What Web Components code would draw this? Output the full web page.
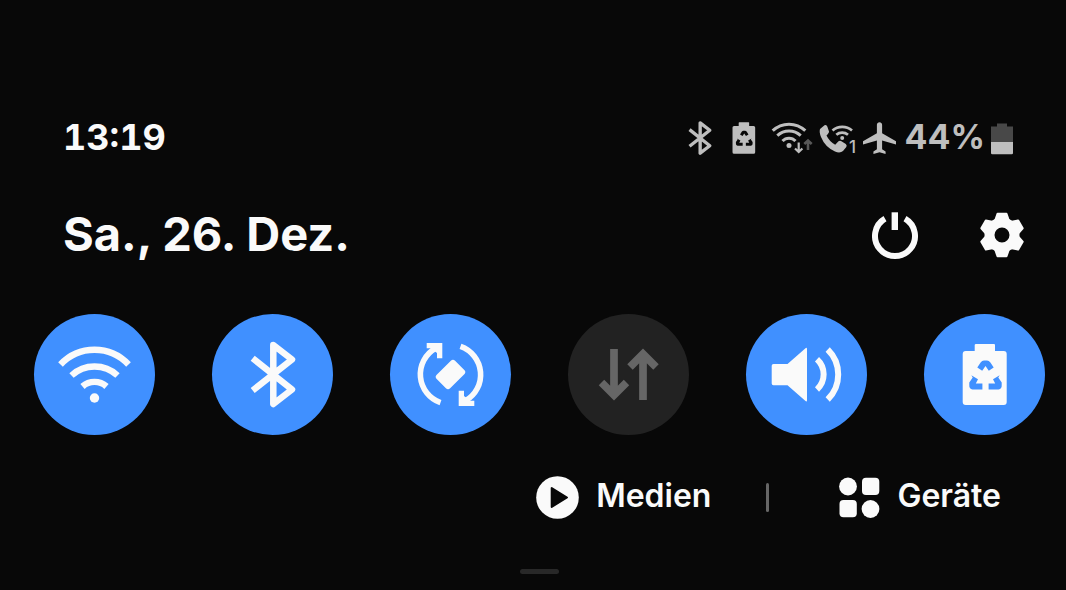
<!DOCTYPE html>
<html lang="de">
<head>
<meta charset="utf-8">
<meta name="viewport" content="width=device-width, initial-scale=1">
<title>Schnelleinstellungen</title>
<style>
  html { background: #080808; }
  body { margin: 0; background: #080808; color: #fafafa; font-family: Inter, "Liberation Sans", sans-serif; }
</style>
</head>
<body>
<quick-panel></quick-panel>
<script>
// Three chunks of the recycling triangle, cut out of the battery in the colour behind it.
const RECYCLE = '<g fill="var(--hole)"><path d="M53.3 53.5 56.6 48.5Q58 46.6 60 46.6H63Q65 46.6 66.400 48.5L69.700 53.5 64.800 56.800 61.500 52 58.200 56.800z"/><path d="M47.300 61.300 54 65.200 51.800 69.500H58.400V75.500H48.500Q45 74.800 45.300 71V68.500L48.700 63.500z"/><path d="M75.700 61.300 69 65.200 71.200 69.500H64.600V75.500H74.500Q78 74.800 77.700 71V68.500L74.300 63.500z"/></g>';

// Each glyph: [viewBox, markup, optional preserveAspectRatio]
const GLYPHS = {
  wifi: ['0 0 121 121', '<g fill="none" stroke="currentColor" stroke-width="6.4"><path d="M26.5 50.5A46.5 46.5 0 0 1 94.5 50.5"/><path d="M37.5 61.5A34 34 0 0 1 83.5 61.5"/><path d="M48.5 72.5A18 18 0 0 1 72.5 72.5"/></g><circle cx="60.5" cy="84" r="4.7" fill="currentColor"/>'],
  bluetooth: ['0 0 121 121', '<path d="M40.7 44.3 80 75.5 61.3 90V31L80 45.5 40.7 76.5" fill="none" stroke="currentColor" stroke-width="6.5" stroke-linejoin="round"/>'],
  rotate: ['0 0 121 121', '<g id="h"><path d="M50.5 88.7A30 30 0 0 1 45.5 34.3" fill="none" stroke="currentColor" stroke-width="5.6"/><path d="M36.7 29H52.3V44.3H47V39L41 34.3H36.7z" fill="currentColor"/></g><use href="#h" transform="rotate(180 60.5 60.5)"/><rect x="47.5" y="51" width="26" height="19" rx="3" transform="rotate(-45 60.5 60.5)" fill="currentColor"/>'],
  data: ['0 0 121 121', '<g fill="none" stroke="currentColor" stroke-width="7.7"><path d="M46 35V82M33.5 68.5 46 81 58.5 68.5"/><path d="M75 86V40M62 53 75 40 88 53"/></g>'],
  sound: ['0 0 121 121', '<path d="M27.5 50H41.5L59.5 34.2Q61 33.2 61 35.2V86.2Q61 88.2 59.5 87L41.5 71.3H27.5Q25.7 71.3 25.7 69.5V51.8Q25.7 50 27.5 50z" fill="currentColor"/><g fill="none" stroke="currentColor" stroke-width="6"><path d="M71 45.2A20.6 20.6 0 0 1 71 75.5"/><path d="M81.7 35.5A35 35 0 0 1 81.7 85.5"/></g>'],
  saver: ['0 0 121 121', '<path d="M52 30H70Q71 30 71 31V37H79.7Q82.7 37 82.7 40V88Q82.7 91 79.7 91H41.7Q38.7 91 38.7 88V40Q38.7 37 41.7 37H50.7V31Q50.7 30 52 30z" fill="currentColor"/>' + RECYCLE],
  wifiTraffic: ['0 0 42 34', '<g fill="none" stroke="currentColor" stroke-width="3"><path d="M1.7 9.7A23.5 23.5 0 0 1 34.3 9.7M6.3 14.7A17 17 0 0 1 29.7 14.7M11.5 20A8.8 8.8 0 0 1 24.5 20"/><path d="M27.7 21.5V31M24 27.5 27.7 31 31.4 27.5" stroke-width="2.2"/><path d="M37 29V19.5M33.3 23 37 19.5 40.7 23" stroke="#585858" stroke-width="2.6"/></g><circle cx="18" cy="24.5" r="2.5" fill="currentColor"/>'],
  call: ['0 0 38 34', '<path d="M1 8 5.5 4.3Q7.5 3.3 8.3 5.5L10 10.5Q10.3 11.7 7.5 14.5 10.5 20.7 16.2 23.7L19.5 20.3Q20.7 19.3 22 20L26.8 23Q28.3 24.3 27.3 26L24 30Q21 32.5 16 30.5 6 26 2 16 0 11 1 8z" fill="currentColor"/><g fill="none" stroke="currentColor" stroke-width="2.7"><path d="M13.5 9.5A15 15 0 0 1 33 9.5M17.3 13.7A9 9 0 0 1 29 13.7"/></g><circle cx="23.2" cy="17" r="2" fill="currentColor"/><text x="30" y="32" font-size="17" font-weight="500" fill="currentColor">1</text>'],
  plane: ['2 1.2 19 21.5', '<path d="M21 16v-2l-8-5V3.5c0-.83-.67-1.5-1.5-1.5S10 2.67 10 3.5V9l-8 5v2l8-2.5V19l-2 1.5V22l3.5-1 3.5 1v-1.5L13 19v-5.5l8 2.5z" fill="currentColor"/>', 'none'],
  charge: ['0 0 22 34', '<path d="M6 2.5H16V5.5H22V21H0V5.5H6z" fill="#484848"/><path d="M0 21H22V32Q22 33.3 20.7 33.3H1.3Q0 33.3 0 32z" fill="currentColor"/>'],
  power: ['0 0 46 48', '<path d="M13 7.7A20 20 0 1 0 33 7.7" fill="none" stroke="currentColor" stroke-width="6"/><path d="M19.6 1.3H26V19H19.6z" fill="currentColor"/>'],
  gear: ['-22 -24 44 48', '<circle r="12.5" fill="none" stroke="currentColor" stroke-width="10"/><g fill="currentColor" stroke="currentColor" stroke-width="2" stroke-linejoin="round">' + [0, 60, 120, 180, 240, 300].map(a => `<path d="M-4.5-21.3H4.5L7-14 3-10H-3L-7-14z" transform="rotate(${a})"/>`).join('') + '</g>'],
  play: ['0 0 43 43', '<circle cx="21.5" cy="21.5" r="21.3" fill="currentColor"/><path d="M15.7 12V31L31 21.5z" fill="#080808" stroke="#080808" stroke-width="2" stroke-linejoin="round"/>'],
  devices: ['0 0 41 43', '<g fill="currentColor"><circle cx="9" cy="10.5" r="8.9"/><rect x="23" y="1.7" width="17.3" height="17.3" rx="4"/><rect x=".5" y="24" width="17.3" height="17.3" rx="4"/><circle cx="31.5" cy="33" r="8.9"/></g>']
};

const mount = (host, html) => { host.attachShadow({ mode: 'open' }).innerHTML = html; };

// A vector icon; its size comes from the width and height attributes.
customElements.define('ui-glyph', class extends HTMLElement {
  connectedCallback() {
    if (this.shadowRoot) return;
    const [box, art, fit] = GLYPHS[this.getAttribute('name')];
    const view = this.getAttribute('crop') || box;
    mount(this, `<style>:host{display:block;flex:none}svg{display:block;overflow:visible}text{font-family:inherit}</style>
      <svg aria-hidden="true" width="${this.getAttribute('width')}" height="${this.getAttribute('height')}" viewBox="${view}" preserveAspectRatio="${fit || 'xMidYMid meet'}">${art}</svg>`);
  }
});

customElements.define('status-bar', class extends HTMLElement {
  connectedCallback() {
    mount(this, `<style>
      :host{display:flex;justify-content:space-between;align-items:flex-start;padding:0 32px 0 29px}
      time,.level{font-size:36px;line-height:32px;font-weight:700}
      time{font-variant-numeric:tabular-nums}
      .icons{display:flex;gap:6px;color:#bebebe;--hole:#080808}
      .level{font-size:34px;padding-left:2px}
    </style>
    <time datetime="13:19">13:19</time>
    <div class="icons">
      <ui-glyph name="bluetooth" width="34" height="34" crop="29 27.5 64 66"></ui-glyph>
      <ui-glyph name="saver" width="42" height="34" crop="29 27.5 64 66"></ui-glyph>
      <ui-glyph name="wifiTraffic" width="42" height="34"></ui-glyph>
      <ui-glyph name="call" width="38" height="34"></ui-glyph>
      <ui-glyph name="plane" width="33" height="34"></ui-glyph>
      <span class="level">44%</span>
      <ui-glyph name="charge" width="22" height="34"></ui-glyph>
    </div>`);
  }
});

customElements.define('icon-button', class extends HTMLElement {
  connectedCallback() {
    mount(this, `<style>
      :host{display:block}
      button{display:flex;align-items:center;border:0;padding:0;background:none;color:inherit;font:inherit;cursor:pointer}
    </style><button type="button" aria-label="${this.getAttribute('label')}"><slot></slot></button>`);
  }
});

customElements.define('date-bar', class extends HTMLElement {
  connectedCallback() {
    mount(this, `<style>
      :host{display:flex;justify-content:space-between;align-items:flex-start;padding:0 21px 0 29px}
      h1{margin:0;font-size:47px;line-height:46px;font-weight:700}
      .actions{display:flex;gap:62px}
    </style>
    <h1>Sa., 26. Dez.</h1>
    <div class="actions">
      <icon-button label="Ein/Aus"><ui-glyph name="power" width="46" height="48"></ui-glyph></icon-button>
      <icon-button label="Einstellungen"><ui-glyph name="gear" width="44" height="48"></ui-glyph></icon-button>
    </div>`);
  }
});

customElements.define('quick-toggle', class extends HTMLElement {
  connectedCallback() {
    const on = this.hasAttribute('on');
    mount(this, `<style>
      :host{display:block;--hole:#4090ff}
      button{display:block;border:0;padding:0;border-radius:50%;background:#222;color:#666;cursor:pointer}
      button[aria-pressed=true]{background:#4090ff;color:#fafafa}
    </style>
    <button type="button" aria-pressed="${on}" aria-label="${this.getAttribute('label')}">
      <ui-glyph name="${this.getAttribute('icon')}" width="121" height="121"></ui-glyph>
    </button>`);
  }
});

customElements.define('panel-link', class extends HTMLElement {
  connectedCallback() {
    mount(this, `<style>
      :host{display:block}
      button{display:flex;align-items:flex-start;gap:17px;border:0;padding:0;background:none;color:inherit;font:600 32px/40px Inter,"Liberation Sans",sans-serif;cursor:pointer}
    </style><button type="button"><slot name="icon"></slot><slot></slot></button>`);
  }
});

customElements.define('quick-panel', class extends HTMLElement {
  connectedCallback() {
    mount(this, `<style>
      :host{display:flex;flex-direction:column;padding:121px 21px 16px 34px}
      date-bar{margin-top:56px}
      .toggles{display:flex;justify-content:space-between;margin-top:55px}
      .links{display:flex;justify-content:flex-end;align-items:center;margin-top:41px;padding-right:44px}
      .rule{width:3px;height:29px;border-radius:2px;background:#666;margin:0 70px 0 55px}
      .handle{width:39px;height:5px;border-radius:3px;background:#282828;align-self:center;margin-top:50px}
    </style>
    <status-bar></status-bar>
    <date-bar></date-bar>
    <div class="toggles">
      <quick-toggle icon="wifi" label="WLAN" on></quick-toggle>
      <quick-toggle icon="bluetooth" label="Bluetooth" on></quick-toggle>
      <quick-toggle icon="rotate" label="Automatisch drehen" on></quick-toggle>
      <quick-toggle icon="data" label="Mobile Daten"></quick-toggle>
      <quick-toggle icon="sound" label="Ton" on></quick-toggle>
      <quick-toggle icon="saver" label="Energiesparen" on></quick-toggle>
    </div>
    <div class="links">
      <panel-link><ui-glyph slot="icon" name="play" width="43" height="43"></ui-glyph>Medien</panel-link>
      <span class="rule"></span>
      <panel-link><ui-glyph slot="icon" name="devices" width="41" height="43"></ui-glyph>Geräte</panel-link>
    </div>
    <div class="handle"></div>`);
  }
});
</script>
</body>
</html>
